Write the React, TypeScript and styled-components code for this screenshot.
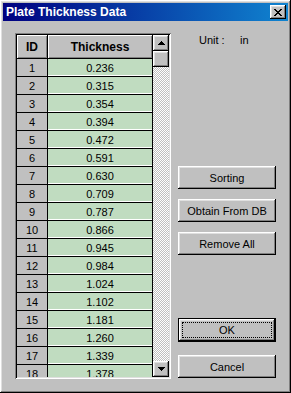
import React from "react";
import styled, { createGlobalStyle } from "styled-components";

const GlobalStyle = createGlobalStyle`
  html, body {
    margin: 0;
    padding: 0;
    background: #c0c0c0;
  }
  * {
    box-sizing: border-box;
  }
`;

const raised = `
  box-shadow:
    inset -1px -1px #000000,
    inset 1px 1px #ffffff,
    inset -2px -2px #808080,
    inset 2px 2px #dfdfdf;
`;

const Window = styled.div`
  width: 291px;
  height: 393px;
  padding: 3px;
  background: #c0c0c0;
  display: flex;
  flex-direction: column;
  font-family: "Liberation Sans", Arial, sans-serif;
  font-size: 11px;
  color: #000;
  ${raised}
`;

const TitleBar = styled.div`
  height: 18px;
  display: flex;
  align-items: center;
  justify-content: space-between;
  padding: 0 2px 0 3px;
  background: linear-gradient(90deg, #000080, #1084d0);
`;

const TitleText = styled.span`
  color: #fff;
  font-weight: bold;
  font-size: 12px;
`;

const CloseButton = styled.div`
  width: 16px;
  height: 14px;
  background: #c0c0c0;
  display: flex;
  align-items: center;
  justify-content: center;
  ${raised}
`;

const Body = styled.div`
  flex: 1;
  display: flex;
  padding: 12px 12px 0 12px;
`;

const GridFrame = styled.div`
  width: 156px;
  height: 346px;
  padding: 2px;
  display: flex;
  background: #c0c0c0;
  box-shadow:
    inset 1px 1px #808080,
    inset -1px -1px #ffffff,
    inset 2px 2px #000000,
    inset -2px -2px #dfdfdf;
`;

const Table = styled.div`
  width: 136px;
  overflow: hidden;
  display: flex;
  flex-direction: column;
`;

const Row = styled.div<{ $head?: boolean }>`
  display: grid;
  grid-template-columns: 31px 105px;
  height: ${(p) => (p.$head ? 24 : 18)}px;
  flex-shrink: 0;
`;

const HeadCell = styled.div`
  display: flex;
  align-items: center;
  justify-content: center;
  font-weight: bold;
  font-size: 12px;
  border-right: 1px solid #000;
  border-bottom: 1px solid #000;
  box-shadow:
    inset 1px 1px #ffffff,
    inset -1px -1px #808080;
`;

const IdCell = styled.div`
  display: flex;
  align-items: center;
  justify-content: center;
  border-right: 1px solid #000;
  border-bottom: 1px solid #000;
  padding-top: 1px;
`;

const ValueCell = styled.div`
  display: flex;
  align-items: center;
  justify-content: center;
  background: #c0dcc0;
  border-right: 1px solid #000;
  border-bottom: 1px solid #000;
  box-shadow: inset 0 -1px #ffffff;
  padding-top: 1px;
`;

const ScrollBar = styled.div`
  width: 16px;
  display: flex;
  flex-direction: column;
  background: repeating-conic-gradient(#c0c0c0 0% 25%, #ffffff 0% 50%) 0 0 /
    2px 2px;
`;

const ScrollButton = styled.div`
  width: 16px;
  height: 16px;
  background: #c0c0c0;
  display: flex;
  align-items: center;
  justify-content: center;
  flex-shrink: 0;
  ${raised}
`;

const ScrollTrack = styled.div`
  flex: 1;
`;

const Side = styled.div`
  flex: 1;
  display: flex;
  flex-direction: column;
  padding-left: 7px;
`;

const UnitLabel = styled.div`
  height: 14px;
  line-height: 14px;
  padding-left: 21px;
  white-space: pre;
`;

const Button = styled.div<{ $top: number; $default?: boolean }>`
  width: 98px;
  height: ${(p) => (p.$default ? 24 : 23)}px;
  margin-top: ${(p) => p.$top}px;
  background: #c0c0c0;
  display: flex;
  align-items: center;
  justify-content: center;
  position: relative;
  ${(p) =>
    p.$default
      ? `
    border: 1px solid #000;
    box-shadow:
      inset -1px -1px #000000,
      inset 1px 1px #ffffff,
      inset -2px -2px #808080,
      inset 2px 2px #dfdfdf;
  `
      : raised}
`;

const FocusRing = styled.span`
  position: absolute;
  inset: 3px;
  border: 1px dotted #000;
`;

const Arrow = ({ down }: { down?: boolean }) => (
  <svg width="7" height="4" viewBox="0 0 7 4" shapeRendering="crispEdges">
    <path
      d={down ? "M0 0h7v1H0zM1 1h5v1H1zM2 2h3v1H2zM3 3h1v1H3z" : "M3 0h1v1H3zM2 1h3v1H2zM1 2h5v1H1zM0 3h7v1H0z"}
      fill="#000"
    />
  </svg>
);

const values = [
  "0.236", "0.315", "0.354", "0.394", "0.472", "0.591", "0.630", "0.709", "0.787",
  "0.866", "0.945", "0.984", "1.024", "1.102", "1.181", "1.260", "1.339", "1.378",
];

const App: React.FC = () => {
  return (
    <>
      <GlobalStyle />
      <Window>
        <TitleBar>
          <TitleText>Plate Thickness Data</TitleText>
          <CloseButton>
            <svg width="8" height="7" viewBox="0 0 8 7" shapeRendering="crispEdges">
              <path
                d="M0 0h2v1H0zM6 0h2v1H6zM1 1h2v1H1zM5 1h2v1H5zM2 2h4v1H2zM3 3h2v1H3zM2 4h4v1H2zM1 5h2v1H1zM5 5h2v1H5zM0 6h2v1H0zM6 6h2v1H6z"
                fill="#000"
              />
            </svg>
          </CloseButton>
        </TitleBar>
        <Body>
          <GridFrame>
            <Table>
              <Row $head>
                <HeadCell>ID</HeadCell>
                <HeadCell>Thickness</HeadCell>
              </Row>
              {values.map((v, i) => (
                <Row key={v}>
                  <IdCell>{i + 1}</IdCell>
                  <ValueCell>{v}</ValueCell>
                </Row>
              ))}
            </Table>
            <ScrollBar>
              <ScrollButton>
                <Arrow />
              </ScrollButton>
              <ScrollButton />
              <ScrollTrack />
              <ScrollButton>
                <Arrow down />
              </ScrollButton>
            </ScrollBar>
          </GridFrame>
          <Side>
            <UnitLabel>{"Unit :     in"}</UnitLabel>
            <Button $top={119}>Sorting</Button>
            <Button $top={10}>Obtain From DB</Button>
            <Button $top={10}>Remove All</Button>
            <Button $top={63} $default>
              <FocusRing />
              OK
            </Button>
            <Button $top={13}>Cancel</Button>
          </Side>
        </Body>
      </Window>
    </>
  );
};

export default App;
